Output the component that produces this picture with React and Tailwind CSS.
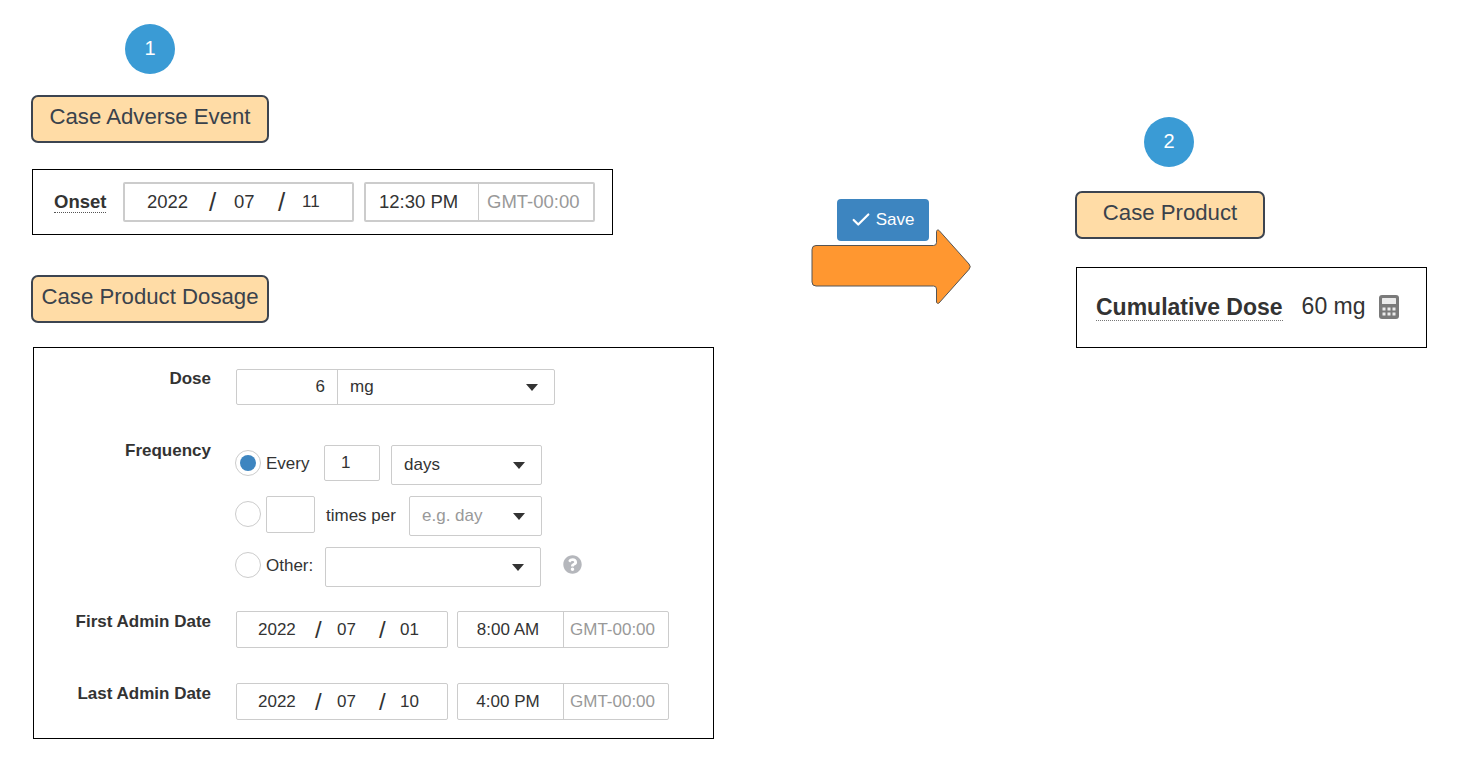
import { Check } from "lucide-react";
import { FaQuestionCircle } from "react-icons/fa";

const Badge = ({ n, className = "" }) => (
  <div className={`w-[50px] h-[50px] rounded-full bg-[#3a9bd5] text-white flex items-center justify-center text-[20px] pb-[2px] ${className}`}>
    {n}
  </div>
);

const Pill = ({ children, className = "" }) => (
  <div className={`h-[48px] bg-[#ffdca6] border-2 border-[#3c4450] rounded-[7px] flex items-center justify-center text-[22.2px] text-[#3a424c] pb-[5px] ${className}`}>
    {children}
  </div>
);

const Caret = ({ className = "" }) => (
  <svg width="12" height="7" viewBox="0 0 12 7" className={className}>
    <path d="M0 0h12L6 7z" fill="#333" />
  </svg>
);

const Calculator = ({ className = "" }) => (
  <svg width="20" height="24" viewBox="0 0 20 24" className={className}>
    <rect width="20" height="24" rx="3" fill="#7a7a7a" />
    <rect x="3" y="3" width="14" height="6" rx="0.5" fill="#fff" fillOpacity="0.85" />
    <path
      d="M3.5 12.5h3v3h-3zM8.5 12.5h3v3h-3zM13.5 12.5h3v3h-3zM3.5 17.5h3v3h-3zM8.5 17.5h3v3h-3zM13.5 17.5h3v3h-3z"
      fill="#fff"
      fillOpacity="0.85"
    />
  </svg>
);

const Select = ({ children, className = "", muted = false }) => (
  <div className={`border border-[#ccc] rounded-[2px] flex items-center justify-between pl-[12px] pr-[16px] text-[17px] ${muted ? "text-[#999]" : "text-[#333]"} ${className}`}>
    <span>{children}</span>
    <Caret />
  </div>
);

const DateField = ({ y, m, d, time, large = false }) => {
  const box = "border border-[#ccc] rounded-[2px] flex items-center";
  if (large) {
    return (
      <div className="flex gap-[10px] text-[18.5px] text-[#333]">
        <div className={`${box} border-2 w-[231px] h-[40px] pl-[22px]`}>
          <span className="w-[41px]">{y}</span>
          <span className="text-[26px] ml-[21px] w-[24px] leading-none">/</span>
          <span className="ml-[1px] w-[21px]">{m}</span>
          <span className="text-[26px] ml-[23px] w-[24px] leading-none">/</span>
          <span className="text-[17px]">{d}</span>
        </div>
        <div className={`${box} border-2 w-[231px] h-[40px]`}>
          <span className="w-[112px] pl-[13px]">{time}</span>
          <span className="flex-1 h-full flex items-center border-l border-[#ccc] pl-[8px] text-[#999]">GMT-00:00</span>
        </div>
      </div>
    );
  }
  return (
    <div className="flex gap-[9px] text-[17px] text-[#333]">
      <div className={`${box} w-[212px] h-[37px] pl-[21px]`}>
        <span className="w-[39px]">{y}</span>
        <span className="text-[24px] ml-[18px] w-[14px] leading-none">/</span>
        <span className="ml-[8px] w-[20px]">{m}</span>
        <span className="text-[24px] ml-[22px] w-[14px] leading-none">/</span>
        <span className="ml-[7px]">{d}</span>
      </div>
      <div className={`${box} w-[212px] h-[37px]`}>
        <span className="w-[105px] text-center pr-[5px]">{time}</span>
        <span className="flex-1 h-full flex items-center border-l border-[#ccc] pl-[6px] text-[#999]">GMT-00:00</span>
      </div>
    </div>
  );
};

const Radio = ({ on = false }) => (
  <div className="w-[26px] h-[26px] -mt-[4px] rounded-full border border-[#ccc] flex items-center justify-center shrink-0">
    {on && <div className="w-[16px] h-[16px] rounded-full bg-[#3d85c0]" />}
  </div>
);

const Label = ({ children, className = "" }) => (
  <div className={`w-[177px] shrink-0 text-right font-bold text-[17px] text-[#333] ${className}`}>{children}</div>
);

const Arrow = () => (
  <svg width="162" height="78" viewBox="0 0 162 78" className="block">
    <path
      d="M5 17.5H122.5a3 3 0 0 0 3-3V3.5a1.5 1.5 0 0 1 2.6-1L158 36a4 4 0 0 1 0 5.4L128 75a1.5 1.5 0 0 1-2.5-1V61a3 3 0 0 0-3-3H5a4 4 0 0 1-4-4V21.5a4 4 0 0 1 4-4z"
      fill="#ff9730"
      stroke="#555"
      strokeWidth="1"
    />
  </svg>
);

export default function App() {
  return (
    <div className="relative w-[1469px] h-[767px] bg-white overflow-hidden flex font-['Liberation_Sans',Arial,sans-serif]">
      {/* left column */}
      <div className="w-[683px] ml-[31px] pt-[24px] shrink-0">
        <Badge n="1" className="ml-[94px]" />
        <Pill className="w-[238px] mt-[21px]">Case Adverse Event</Pill>
        <div className="ml-[1px] mt-[26px] w-[581px] h-[66px] border border-black flex items-center pl-[21px]">
          <span className="w-[69px] font-bold text-[18.5px] text-[#333]">
            <span className="border-b border-dotted border-[#555]">Onset</span>
          </span>
          <DateField large y="2022" m="07" d="11" time="12:30 PM" />
        </div>
        <Pill className="w-[238px] mt-[40px]">Case Product Dosage</Pill>
        <div className="ml-[2px] mt-[24px] w-[681px] h-[392px] border border-black pt-[21px] flex flex-col">
          <div className="flex gap-[25px]">
            <Label className="-mt-[3px]">Dose</Label>
            <div className="w-[319px] h-[36px] border border-[#ccc] rounded-[2px] flex text-[17px] text-[#333]">
              <span className="w-[101px] flex items-center justify-end pr-[12px] border-r border-[#ccc] -mt-[1px]">6</span>
              <div className="flex-1 flex items-center justify-between pl-[12px] pr-[16px]">
                <span>mg</span>
                <Caret />
              </div>
            </div>
          </div>

          <div className="flex gap-[24px] mt-[40px]">
            <Label className="-mt-[7px]">Frequency</Label>
            <div className="flex flex-col gap-[11px] text-[17px] text-[#333]">
              <div className="flex h-[40px] items-center">
                <Radio on />
                <span className="ml-[5px] w-[58px] -mt-[3px]">Every</span>
                <span className="w-[56px] h-[36px] -mt-[4px] border border-[#ccc] rounded-[2px] flex items-center pl-[16px]">1</span>
                <Select className="w-[151px] h-[40px] ml-[11px]">days</Select>
              </div>
              <div className="flex h-[40px] items-center">
                <Radio />
                <span className="ml-[5px] w-[49px] h-[37px] -mt-[3px] border border-[#ccc] rounded-[2px]" />
                <span className="ml-[11px] w-[83px] -mt-[1px]">times per</span>
                <Select muted className="w-[133px] h-[40px]">e.g. day</Select>
              </div>
              <div className="flex h-[40px] items-center">
                <Radio />
                <span className="ml-[5px] w-[59px] -mt-[3px]">Other:</span>
                <Select className="w-[216px] h-[40px]"></Select>
                <FaQuestionCircle className="ml-[22px] text-[#b5b7bc] text-[19px] -mt-[6px]" />
              </div>
            </div>
          </div>

          <div className="flex gap-[25px] mt-[24px]">
            <Label className="-mt-[2px]">First Admin Date</Label>
            <DateField y="2022" m="07" d="01" time="8:00 AM" />
          </div>
          <div className="flex gap-[25px] mt-[35px]">
            <Label className="-mt-[2px]">Last Admin Date</Label>
            <DateField y="2022" m="07" d="10" time="4:00 PM" />
          </div>
        </div>
      </div>

      {/* arrow with the save button */}
      <div className="ml-[97px] w-[162px] pt-[199px] shrink-0">
        <button className="relative z-10 ml-[26px] w-[92px] h-[42px] rounded-[4px] bg-[#3d85c0] text-white text-[17px] flex items-center justify-center gap-[4px] pr-[2px] pb-[1px]">
          <Check size={22} strokeWidth={2.4} />
          Save
        </button>
        <div className="-mt-[13px]">
          <Arrow />
        </div>
      </div>

      {/* right column */}
      <div className="ml-[102px] w-[352px] pt-[117px] shrink-0">
        <Badge n="2" className="ml-[69px]" />
        <Pill className="w-[190px] mt-[24px]">Case Product</Pill>
        <div className="ml-[1px] mt-[28px] w-[351px] h-[81px] border border-black flex items-center pl-[19px]">
          <span className="font-bold text-[23px] text-[#333] border-b border-dotted border-[#777] leading-[26px] -mt-[1px]">Cumulative Dose</span>
          <span className="ml-[19px] text-[23px] text-[#333] -mt-[2px]">60 mg</span>
          <Calculator className="ml-[13px] -mt-[2px]" />
        </div>
      </div>
    </div>
  );
}
